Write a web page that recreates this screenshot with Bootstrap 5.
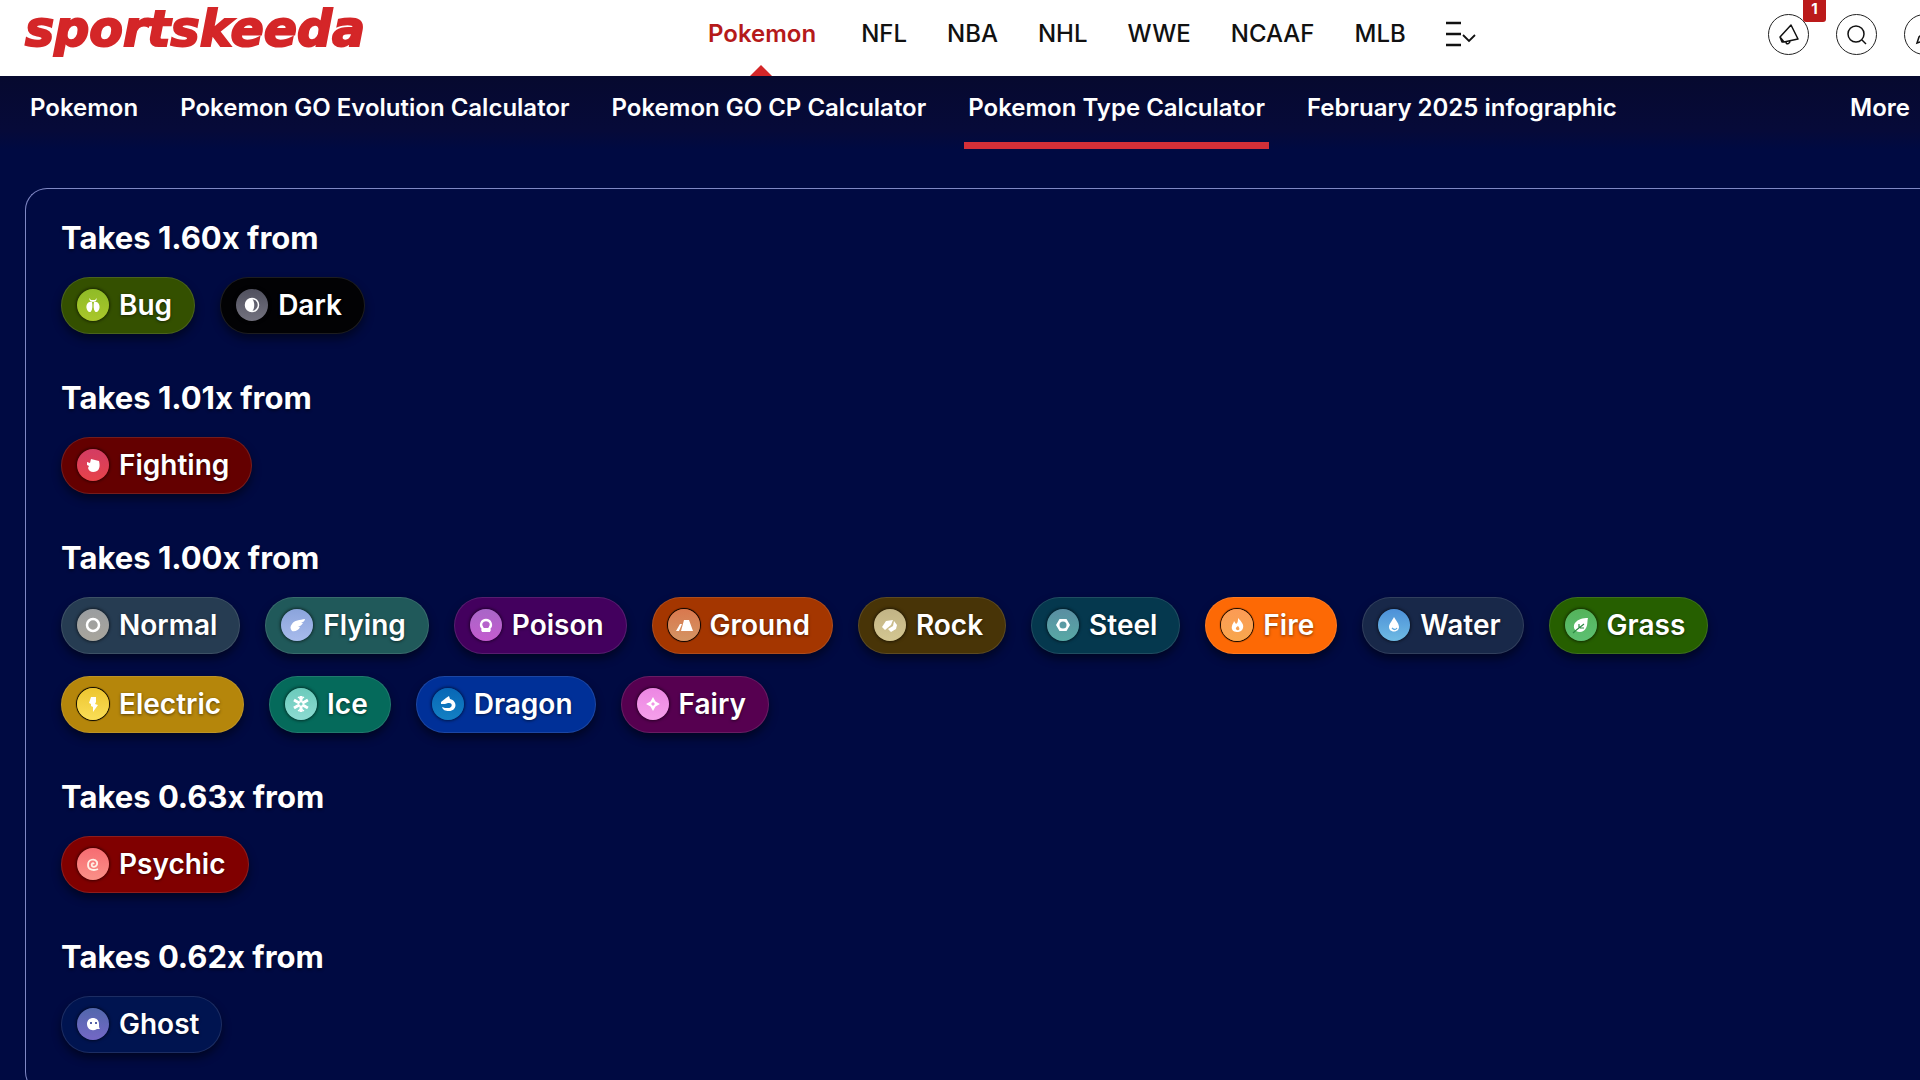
<!DOCTYPE html>
<html lang="en">
<head>
<meta charset="utf-8">
<meta name="viewport" content="width=device-width, initial-scale=1">
<title>Pokemon Type Calculator</title>
<link href="https://cdn.jsdelivr.net/npm/bootstrap@5.3.0/dist/css/bootstrap.min.css" rel="stylesheet">
<style>
  body { font-family: Inter, "Open Sans", sans-serif; background: #000a42; color: #fff; overflow-x: hidden; }
  a { text-decoration: none; }
  .site-top { height: 76px; background: #fff; overflow: hidden; }
  .brand { font: italic 700 49px/60px "DejaVu Sans", sans-serif; color: #d42628; width: 703px; padding-left: 25px; -webkit-text-stroke: 2px #d42628; }
  .sports { gap: 40px; font-size: 24px; font-weight: 500; line-height: 68px; }
  .sports a { color: #111; }
  .sports a.current { color: #b51a1a; font-weight: 600; position: relative; padding: 0 5px; }
  .sports a.current::after { content: ""; position: absolute; left: 50%; bottom: -8px; margin-left: -12px; border: 11px solid transparent; border-top: 0; border-bottom-color: #d42628; }
  .plain-btn { background: none; border: 0; padding: 0; color: #111; }
  .tools { gap: 27px; margin-right: -25px; padding-top: 14px; }
  .round-btn { width: 41px; height: 41px; border: 1px solid #222; border-radius: 50%; position: relative; }
  .round-btn svg { display: block; margin: auto; }
  .alert-count { position: absolute; left: 34px; top: -15px; width: 23px; height: 22px; border-radius: 0 0 3px 3px; background: #bb1a1a; color: #fff; font-size: 15px; font-weight: 700; line-height: 18px; }
  .section-bar { height: 73px; background: linear-gradient(#06092f, #060a39 75%, #000a42); padding: 0 6px 0 26px; font-size: 24px; font-weight: 600; line-height: 64px; }
  .section-links { gap: 34px; }
  .section-bar a { color: #fff; padding: 0 4px; }
  .section-links a.current { border-bottom: 7px solid #d32f38; height: 73px; }
  .results { margin: 39px 0 0 25px; border: 1px solid #7f88c4; border-right: 0; border-radius: 22px 0 0 22px; padding: 25px 35px 0; }
  .results h2 { font-size: 31px; font-weight: 700; line-height: 48px; margin: 0 0 15px; text-shadow: 0 2px 3px #0006; }
  .types { gap: 22px 25px; padding-bottom: 40px; max-width: 1700px; }
  .type-pill { height: 57px; gap: 10px; padding: 0 22px 2px 15px; border: 1px solid #ffffff1c; border-radius: 29px; box-shadow: 0 5px 10px #0007; font-size: 28px; font-weight: 600; line-height: 54px; text-shadow: 0 1px 3px #0008; background: var(--pill); background-clip: border-box; }
  .type-icon { width: 32px; height: 32px; border-radius: 50%; background: linear-gradient(var(--from), var(--to)); box-shadow: 0 0 3px 1px #0008; flex: none; fill: #fff; }
  .ground .type-icon, .fire .type-icon, .electric .type-icon { box-shadow: 0 0 1px 1px #000; }
  .bug { --pill: #345000; --from: #8fbb27; --to: #aac72b; }
  .dark { --pill: #020204; --from: #50505e; --to: #73727f; }
  .fighting { --pill: #640000; --from: #d33c63; --to: #e7434a; }
  .normal { --pill: #263c52; --from: #9a9da0; --to: #a8a59c; }
  .flying { --pill: #20595a; --from: #8ba4dc; --to: #a8bbec; }
  .poison { --pill: #43005e; --from: #a866c7; --to: #c45ccf; }
  .ground { --pill: #a43600; --from: #d9784e; --to: #d49463; }
  .rock { --pill: #483407; --from: #c2b486; --to: #d3c691; }
  .steel { --pill: #05384e; --from: #5a8ea2; --to: #58a9a5; }
  .fire { --pill: #fd6905; --from: #fb9b55; --to: #f8a74e; }
  .water { --pill: #182849; --from: #4c90d8; --to: #6fbbe3; }
  .grass { --pill: #265f00; --from: #54b35b; --to: #5dc072; }
  .electric { --pill: #b5860b; --from: #edc530; --to: #fade57; }
  .ice { --pill: #056a5b; --from: #6bcabb; --to: #8ddbd2; }
  .dragon { --pill: #003098; --from: #0867b6; --to: #1380c3; }
  .fairy { --pill: #560050; --from: #ec86e3; --to: #f5a0ea; }
  .psychic { --pill: #800000; --from: #f66c72; --to: #fa9188; }
  .ghost { --pill: #001450; --from: #5267ac; --to: #7468c6; }
</style>
<script src="https://cdn.jsdelivr.net/npm/bootstrap@5.3.0/dist/js/bootstrap.bundle.min.js"></script>
</head>
<body>
<svg class="d-none" xmlns="http://www.w3.org/2000/svg">
  <symbol id="bug" viewBox="0 0 32 32"><path d="M15 13c-4-1-6 3-5.500 6 .5 3 2.500 5 4.500 3.500 1.500-2 1.700-6 1-9.500zM17 13c4-1 6 3 5.500 6-.5 3-2.500 5-4.500 3.500-1.500-2-1.700-6-1-9.500zM12 9l2 2h4l2-2-1 3-3 1-3-1z"/></symbol>
  <symbol id="dark" viewBox="0 0 32 32"><circle cx="16" cy="16" r="6.500" fill="none" stroke="#fff" stroke-width="1.500"/><path d="M16 9.500a6.500 6.500 0 0 0 0 13c3-3 3-10 0-13z"/></symbol>
  <symbol id="fighting" viewBox="0 0 32 32"><path d="M10 13l3 1 1-4 8 2c1 4 1 8-2 10-4 2-8 1-9-3l1-2-2-1z"/></symbol>
  <symbol id="normal" viewBox="0 0 32 32"><circle cx="16" cy="16" r="6" fill="none" stroke="#fff" stroke-width="2.500"/></symbol>
  <symbol id="flying" viewBox="0 0 32 32"><path d="M24 10c-5 1-11 1-13 5-2 2-2 5 0 7 3 1 7-1 8-4l-2 0c2-1 4-2 5-4l-2 0c2-1 4-2 4-4z"/></symbol>
  <symbol id="poison" viewBox="0 0 32 32"><path d="M12.500 19c-3-3-1-8 3.500-8s6.500 5 3.500 8v2h-7z" fill="none" stroke="#fff" stroke-width="2.300"/><path d="M12 19h8v4h-8z"/></symbol>
  <symbol id="ground" viewBox="0 0 32 32"><path d="M13 22l3-11h5l4 11zM8 22l4-7h2l-3 7z"/></symbol>
  <symbol id="rock" viewBox="0 0 32 32"><path d="M8 18l4-6 7-1-2 5-6 5zM14 20l5-3 1-5 3 4-1 4-5 3z"/></symbol>
  <symbol id="steel" viewBox="0 0 32 32"><path d="M12.500 10h7l3.500 6-3.500 6h-7L9 16zM16 12.500a3.500 3.500 0 1 0 0 7 3.500 3.500 0 0 0 0-7z" fill-rule="evenodd"/></symbol>
  <symbol id="fire" viewBox="0 0 32 32"><path d="M17 9c4 4 6 7 5 10-1 4-5 4-6 4-4 0-6-3-5-6 0-2 2-3 2-5l2 3c2-1 2-4 2-6zM17 17c-2 1-3 3-1 4 3 1 3-2 1-4z" fill-rule="evenodd"/></symbol>
  <symbol id="water" viewBox="0 0 32 32"><path d="M16 8c3 5 5 7 5 10 0 6-10 6-10 0 0-3 3-6 5-10z"/><path d="M14 19q3 3 5 0" fill="none" stroke="#5daae0" stroke-width="1.300"/></symbol>
  <symbol id="grass" viewBox="0 0 32 32"><path d="M23 9c-5 0-10 1-13 5-2 3-1 6 1 8 4 2 8 1 10-3 2-3 1-7 2-10z"/><path d="M8 24c3-3 6-5 11-9M14 19v-4M15 19l4 0" fill="none" stroke="#2d8b45" stroke-width="1.200"/></symbol>
  <symbol id="electric" viewBox="0 0 32 32"><path d="M14 9h5v5l-1 2 3 1-5 7 0-5-2-1 0-2-2-1z"/></symbol>
  <symbol id="ice" viewBox="0 0 32 32"><path d="M16 8v16M9 12l14 8M9 20l14-8" stroke="#fff" stroke-width="3" stroke-dasharray="6.500 3"/><path d="M13 9l3 2 3-2M13 23l3-2 3 2" fill="none" stroke="#fff" stroke-width="1.500"/></symbol>
  <symbol id="dragon" viewBox="0 0 32 32"><path d="M9 14l5-4 3-2 1 3c8 2 7 12-1 12-4 0-6-1-7-4 2 1 4 1 6 1 5 0 5-6 0-5l-3 1-4 0z"/></symbol>
  <symbol id="fairy" viewBox="0 0 32 32"><path d="M16 9l2.500 4.500L23 16l-4.500 2.500L16 23l-2.500-4.500L9 16l4.500-2.500zM16 14l-2 2 2 2 2-2z" fill-rule="evenodd"/></symbol>
  <symbol id="psychic" viewBox="0 0 32 32"><path d="M17 16c-1-2-3 0-2 2 2 2 6 0 5-4-2-4-9-3-9 3 0 5 6 6 10 4" fill="none" stroke="#fff0e6" stroke-width="1.800"/></symbol>
  <symbol id="ghost" viewBox="0 0 32 32"><path d="M22 16c0 3 0 4 1 5l-3 0c-5 3-10 0-10-5 0-8 12-8 12 0z"/><path d="M13 14h2v2h-2zM18 14h2v2h-2z" fill="#535fa8"/></symbol>
</svg>

<header class="site-top d-flex align-items-start">
  <a class="brand flex-shrink-0" href="#">sportskeeda</a>
  <nav class="sports d-flex" aria-label="Sports">
    <a class="current" href="#">Pokemon</a><a href="#">NFL</a><a href="#">NBA</a><a href="#">NHL</a><a href="#">WWE</a><a href="#">NCAAF</a><a href="#">MLB</a>
    <button class="plain-btn d-flex align-items-center" aria-label="More sports"><svg width="30" height="32" viewBox="0 0 30 32" fill="none" stroke="currentColor"><path d="M0 5h15M0 16h15M0 27h15" stroke-width="2.500"/><path d="M17 17l6 6 6-6" stroke-width="1.800"/></svg></button>
  </nav>
  <div class="tools d-flex ms-auto">
    <button class="plain-btn round-btn" aria-label="Notifications"><svg width="24" height="24" viewBox="0 0 24 24" fill="none" stroke="currentColor" stroke-width="1.500" stroke-linejoin="round"><path d="M14 2l7 14-14 3-4-5zM3 14l2 5 3 0M9 19c0 3 4 2 4-1"/></svg><span class="alert-count">1</span></button>
    <button class="plain-btn round-btn" aria-label="Search"><svg width="24" height="24" viewBox="0 0 24 24" fill="none" stroke="currentColor" stroke-width="1.500"><circle cx="11" cy="11" r="8"/><path d="M17 17l4 4"/></svg></button>
    <button class="plain-btn round-btn" aria-label="Write"><svg width="24" height="24" viewBox="0 0 24 24" fill="none" stroke="currentColor" stroke-width="1.500"><path d="M4 20l2-6L17 3l4 4L10 18z"/></svg></button>
  </div>
</header>

<nav class="section-bar d-flex justify-content-between" aria-label="Pokemon tools">
  <div class="section-links d-flex">
    <a href="#">Pokemon</a><a href="#">Pokemon GO Evolution Calculator</a><a href="#">Pokemon GO CP Calculator</a><a class="current" aria-current="page" href="#">Pokemon Type Calculator</a><a href="#">February 2025 infographic</a>
  </div>
  <a href="#">More</a>
</nav>

<main class="results">
  <section>
    <h2>Takes 1.60x from</h2>
    <div class="types d-flex flex-wrap">
      <div class="type-pill bug d-flex align-items-center"><svg class="type-icon"><use href="#bug"/></svg><span>Bug</span></div>
      <div class="type-pill dark d-flex align-items-center"><svg class="type-icon"><use href="#dark"/></svg><span>Dark</span></div>
    </div>
  </section>
  <section>
    <h2>Takes 1.01x from</h2>
    <div class="types d-flex flex-wrap">
      <div class="type-pill fighting d-flex align-items-center"><svg class="type-icon"><use href="#fighting"/></svg><span>Fighting</span></div>
    </div>
  </section>
  <section>
    <h2>Takes 1.00x from</h2>
    <div class="types d-flex flex-wrap">
      <div class="type-pill normal d-flex align-items-center"><svg class="type-icon"><use href="#normal"/></svg><span>Normal</span></div>
      <div class="type-pill flying d-flex align-items-center"><svg class="type-icon"><use href="#flying"/></svg><span>Flying</span></div>
      <div class="type-pill poison d-flex align-items-center"><svg class="type-icon"><use href="#poison"/></svg><span>Poison</span></div>
      <div class="type-pill ground d-flex align-items-center"><svg class="type-icon"><use href="#ground"/></svg><span>Ground</span></div>
      <div class="type-pill rock d-flex align-items-center"><svg class="type-icon"><use href="#rock"/></svg><span>Rock</span></div>
      <div class="type-pill steel d-flex align-items-center"><svg class="type-icon"><use href="#steel"/></svg><span>Steel</span></div>
      <div class="type-pill fire d-flex align-items-center"><svg class="type-icon"><use href="#fire"/></svg><span>Fire</span></div>
      <div class="type-pill water d-flex align-items-center"><svg class="type-icon"><use href="#water"/></svg><span>Water</span></div>
      <div class="type-pill grass d-flex align-items-center"><svg class="type-icon"><use href="#grass"/></svg><span>Grass</span></div>
      <div class="type-pill electric d-flex align-items-center"><svg class="type-icon"><use href="#electric"/></svg><span>Electric</span></div>
      <div class="type-pill ice d-flex align-items-center"><svg class="type-icon"><use href="#ice"/></svg><span>Ice</span></div>
      <div class="type-pill dragon d-flex align-items-center"><svg class="type-icon"><use href="#dragon"/></svg><span>Dragon</span></div>
      <div class="type-pill fairy d-flex align-items-center"><svg class="type-icon"><use href="#fairy"/></svg><span>Fairy</span></div>
    </div>
  </section>
  <section>
    <h2>Takes 0.63x from</h2>
    <div class="types d-flex flex-wrap">
      <div class="type-pill psychic d-flex align-items-center"><svg class="type-icon"><use href="#psychic"/></svg><span>Psychic</span></div>
    </div>
  </section>
  <section>
    <h2>Takes 0.62x from</h2>
    <div class="types d-flex flex-wrap">
      <div class="type-pill ghost d-flex align-items-center"><svg class="type-icon"><use href="#ghost"/></svg><span>Ghost</span></div>
    </div>
  </section>
</main>
</body>
</html>
